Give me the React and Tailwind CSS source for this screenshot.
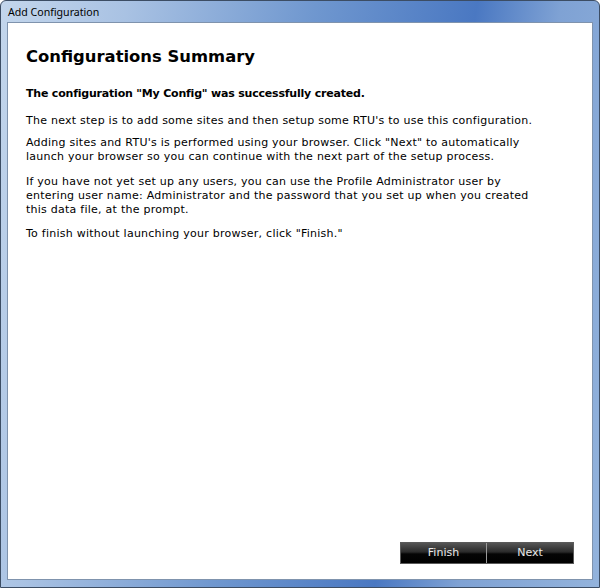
export default function App() {
  return (
    <div className="w-[600px] h-[588px] overflow-hidden bg-white">
      {/* Aero style window frame */}
      <div className="relative w-[600px] h-[588px] rounded-t-[6px] border border-[#3c4d64] bg-[linear-gradient(100deg,#c3d6ec_0%,#a9c2e3_18%,#6f97cf_45%,#4a78c2_68%,#7fa2d4_80%,#93b3dc_100%)] flex flex-col">
        <div className="h-[21px] flex items-center pl-[7px] pt-[3px] text-[10.6px] text-black" style={{ fontFamily: '"Segoe UI", "Noto Sans", "DejaVu Sans", sans-serif' }}>
          Add Configuration
        </div>
        <div className="flex-1 mx-[6px] mb-[7px] border border-[#7f93ad] bg-white flex flex-col">
          <div className="flex-1 flex flex-col pl-[18px] pr-[12px] pt-[23px] text-black" style={{ fontFamily: 'Tahoma, "DejaVu Sans", Verdana, sans-serif' }}>
            <h1 className="text-[16.4px] font-bold leading-[22px]">Configurations Summary</h1>
            <p className="mt-[19px] text-[11px] font-bold leading-[14px] tracking-[-0.2px]">The configuration "My Config" was successfully created.</p>
            <p className="mt-[13px] text-[11px] leading-[14px] tracking-[0.25px]">The next step is to add some sites and then setup some RTU's to use this configuration.</p>
            <p className="mt-[8px] text-[11px] leading-[14px] tracking-[0.25px]">Adding sites and RTU's is performed using your browser. Click "Next" to automatically<br />launch your browser so you can continue with the next part of the setup process.</p>
            <p className="mt-[11px] text-[11px] leading-[14px] tracking-[0.25px]">If you have not yet set up any users, you can use the Profile Administrator user by<br />entering user name: Administrator and the password that you set up when you created<br />this data file, at the prompt.</p>
            <p className="mt-[10px] text-[11px] leading-[14px] tracking-[0.25px]">To finish without launching your browser, click "Finish."</p>
            <div className="flex-1" />
            <div className="flex justify-end pr-[6px] pb-[15px]">
              <div className="flex border border-[#5a5a5a] bg-black">
                <button className="w-[86px] h-[20px] text-[11px] text-[#e8e8e8] bg-[linear-gradient(#555_0%,#2a2a2a_45%,#050505_55%,#000_100%)] border-r border-[#9a9a9a]">Finish</button>
                <button className="w-[86px] h-[20px] text-[11px] text-[#e8e8e8] bg-[linear-gradient(#555_0%,#2a2a2a_45%,#050505_55%,#000_100%)]">Next</button>
              </div>
            </div>
          </div>
        </div>
      </div>
    </div>
  );
}
